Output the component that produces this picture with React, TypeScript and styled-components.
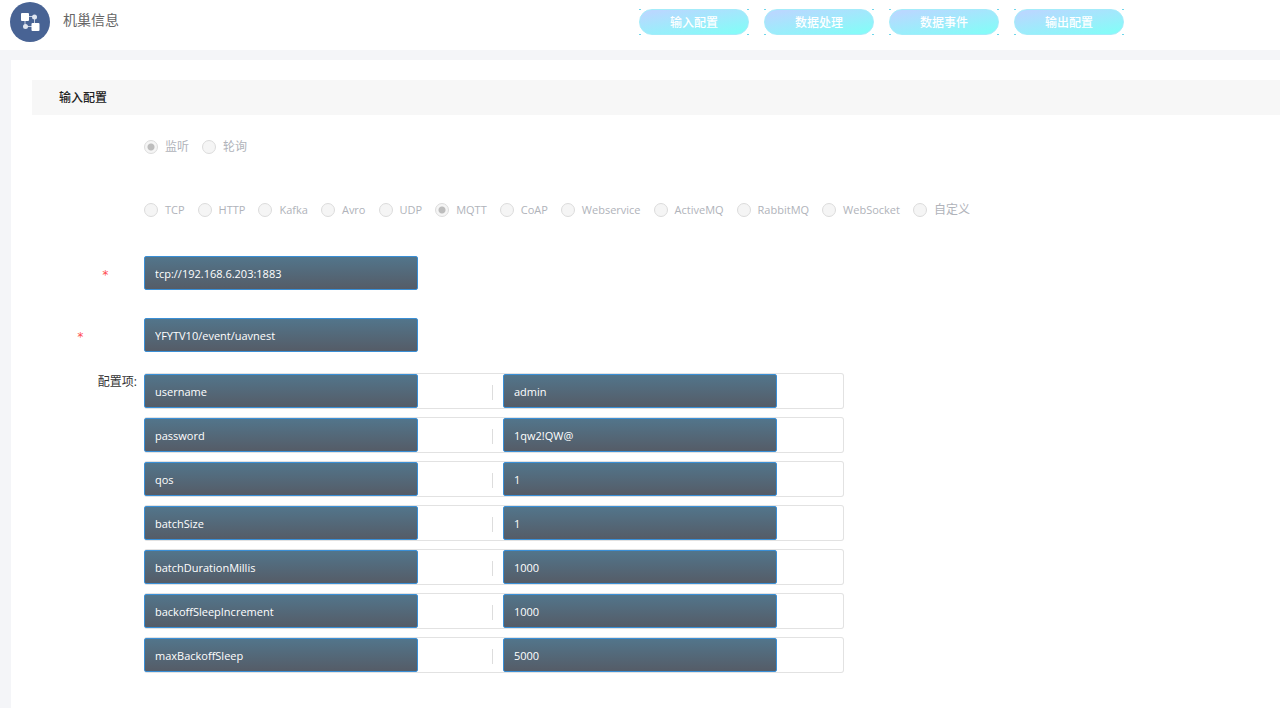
import React from "react";
import styled, { createGlobalStyle } from "styled-components";

const GlobalStyle = createGlobalStyle`
  *, *::before, *::after { box-sizing: border-box; }
  html, body, #root { min-height: 100vh; }
  body {
    margin: 0;
    background: #f4f5f8;
    color: #555;
    font-family: "Open Sans", "Noto Sans CJK SC", sans-serif;
    font-size: 12px;
    line-height: 18px;
  }
  input, button { font: inherit; margin: 0; }
`;

const Page = styled.div`
  display: flex;
  flex-direction: column;
  min-height: 100vh;
`;

const Header = styled.header`
  display: flex;
  align-items: flex-start;
  height: 50px;
  padding-left: 10px;
  background: #fff;
`;

const Brand = styled.div`
  display: flex;
  align-items: flex-start;
  gap: 13px;
  width: calc(50% - 6px);
  padding-top: 2px;
`;

const Logo = styled.svg`
  display: block;
  width: 40px;
  height: 40px;
`;

const Title = styled.h1`
  margin: 0;
  padding-top: 8px;
  font-size: 14px;
  line-height: 20px;
  font-weight: 400;
  color: #666;
`;

const Nav = styled.nav`
  display: flex;
  gap: 15px;
  padding-top: 9px;
`;

const corner = "linear-gradient(#6fd6ea, #6fd6ea)";

const NavButton = styled.button`
  width: 110px;
  height: 26px;
  padding: 0;
  border: 0;
  cursor: pointer;
  color: #fff;
  font-weight: 500;
  background:
    ${corner} left top / 2px 1px no-repeat,
    ${corner} right top / 2px 1px no-repeat,
    ${corner} left bottom / 2px 1px no-repeat,
    ${corner} right bottom / 2px 1px no-repeat;
`;

const Pill = styled.span`
  display: block;
  height: 26px;
  border: 1px solid #a4ecfa;
  border-radius: 13px;
  line-height: 26px;
  background: linear-gradient(170deg, #b9d8ff 10%, #86fbf8 90%);
`;

const Panel = styled.main`
  flex: 1;
  margin: 10px 0 0 11px;
  padding: 20px 0 36px 21px;
  background: #fff;
`;

const SectionTitle = styled.h2`
  margin: 0;
  padding-left: 27px;
  line-height: 35px;
  background: #f7f7f7;
  font-size: 12px;
  font-weight: 500;
  color: #222;
`;

const Form = styled.form`
  display: flex;
  flex-direction: column;
  padding-top: 23px;
`;

const RadioGroup = styled.fieldset<{ $gap: number }>`
  display: flex;
  flex-wrap: wrap;
  gap: 13px;
  min-width: 0;
  margin: 0 0 ${(p) => p.$gap}px 112px;
  padding: 0;
  border: 0;
`;

const RadioLabel = styled.label<{ $latin: boolean }>`
  display: flex;
  align-items: center;
  gap: 6px;
  color: #b0b3ba;
  font-size: ${(p) => (p.$latin ? 11 : 12)}px;
`;

const Radio = styled.input`
  appearance: none;
  width: 14px;
  height: 14px;
  border: 1px solid #dcdcdc;
  border-radius: 50%;
  background: #f5f5f5;

  &:checked {
    background: radial-gradient(circle, #bdbdbd 3px, #f5f5f5 4px);
  }
`;

const RadioText = styled.span`
  padding-left: 1px;
`;

const Field = styled.div<{ $gap: number }>`
  display: flex;
  align-items: flex-start;
  margin-bottom: ${(p) => p.$gap}px;
`;

const FieldLabel = styled.label<{ $inset: number }>`
  width: 112px;
  padding: 10px ${(p) => p.$inset}px 0 0;
  text-align: right;
  font-family: "DejaVu Sans Mono", monospace;
  font-size: 12px;
  line-height: 18px;
  color: #ff4d4f;
`;

const GroupLabel = styled.div`
  width: 112px;
  padding-right: 7px;
  text-align: right;
  color: #333;
`;

const TextInput = styled.input`
  width: 274px;
  height: 34px;
  padding: 0 10px;
  border: 1px solid #3a8fd6;
  border-radius: 2px;
  outline: 0;
  background: linear-gradient(#52758b, #555c67);
  color: #fff;
  font-size: 11px;
`;

const Options = styled.div`
  display: flex;
  flex-direction: column;
  gap: 8px;
`;

const OptionRow = styled.div`
  display: flex;
  align-items: center;
  width: 700px;
  height: 36px;
  border: 1px solid #e2e2e2;
  border-left: 0;
  border-radius: 3px;
`;

const Divider = styled.span`
  width: 1px;
  height: 15px;
  margin: 3px 10px 0 74px;
  background: #ddd;
`;

const tabs = ["输入配置", "数据处理", "数据事件", "输出配置"];
const modes = ["监听", "轮询"];
const protocols = [
  "TCP", "HTTP", "Kafka", "Avro", "UDP", "MQTT", "CoAP",
  "Webservice", "ActiveMQ", "RabbitMQ", "WebSocket", "自定义",
];
const options = [
  ["username", "admin"],
  ["password", "1qw2!QW@"],
  ["qos", "1"],
  ["batchSize", "1"],
  ["batchDurationMillis", "1000"],
  ["backoffSleepIncrement", "1000"],
  ["maxBackoffSleep", "5000"],
];

type RadiosProps = { name: string; items: string[]; selected: string; gap: number };

function Radios({ name, items, selected, gap }: RadiosProps) {
  return (
    <RadioGroup aria-label={name} $gap={gap}>
      {items.map((item) => (
        <RadioLabel key={item} $latin={/^\w+$/.test(item)}>
          <Radio type="radio" name={name} disabled defaultChecked={item === selected} />
          <RadioText>{item}</RadioText>
        </RadioLabel>
      ))}
    </RadioGroup>
  );
}

export default function App() {
  return (
    <>
      <GlobalStyle />
      <Page>
        <Header>
          <Brand>
            <Logo viewBox="0 0 40 40" aria-hidden="true">
              <circle cx="20" cy="20" r="20" fill="#486394" />
              <path d="M15 18v6.500h8M18 14.500h6.500V22" fill="none" stroke="#c3cde0" />
              <rect x="11" y="11" width="8" height="8" rx="1" fill="#fff" />
              <rect x="21.500" y="21" width="8" height="8" rx="1" fill="#fff" />
              <circle cx="24.500" cy="15" r="2.500" fill="#dfe5f0" />
              <circle cx="15.500" cy="24.500" r="2.500" fill="#dfe5f0" />
            </Logo>
            <Title>机巢信息</Title>
          </Brand>
          <Nav>
            {tabs.map((tab) => (
              <NavButton key={tab} type="button">
                <Pill>{tab}</Pill>
              </NavButton>
            ))}
          </Nav>
        </Header>
        <Panel>
          <SectionTitle>输入配置</SectionTitle>
          <Form>
            <Radios name="mode" items={modes} selected="监听" gap={45} />
            <Radios name="protocol" items={protocols} selected="MQTT" gap={37} />
            <Field $gap={28}>
              <FieldLabel htmlFor="address" $inset={35}>*</FieldLabel>
              <TextInput id="address" defaultValue="tcp://192.168.6.203:1883" />
            </Field>
            <Field $gap={21}>
              <FieldLabel htmlFor="topic" $inset={60}>*</FieldLabel>
              <TextInput id="topic" defaultValue="YFYTV10/event/uavnest" />
            </Field>
            <Field $gap={0}>
              <GroupLabel id="options-label">配置项:</GroupLabel>
              <Options role="group" aria-labelledby="options-label">
                {options.map(([key, value]) => (
                  <OptionRow key={key}>
                    <TextInput aria-label={`${key} key`} defaultValue={key} />
                    <Divider />
                    <TextInput aria-label={`${key} value`} defaultValue={value} />
                  </OptionRow>
                ))}
              </Options>
            </Field>
          </Form>
        </Panel>
      </Page>
    </>
  );
}
